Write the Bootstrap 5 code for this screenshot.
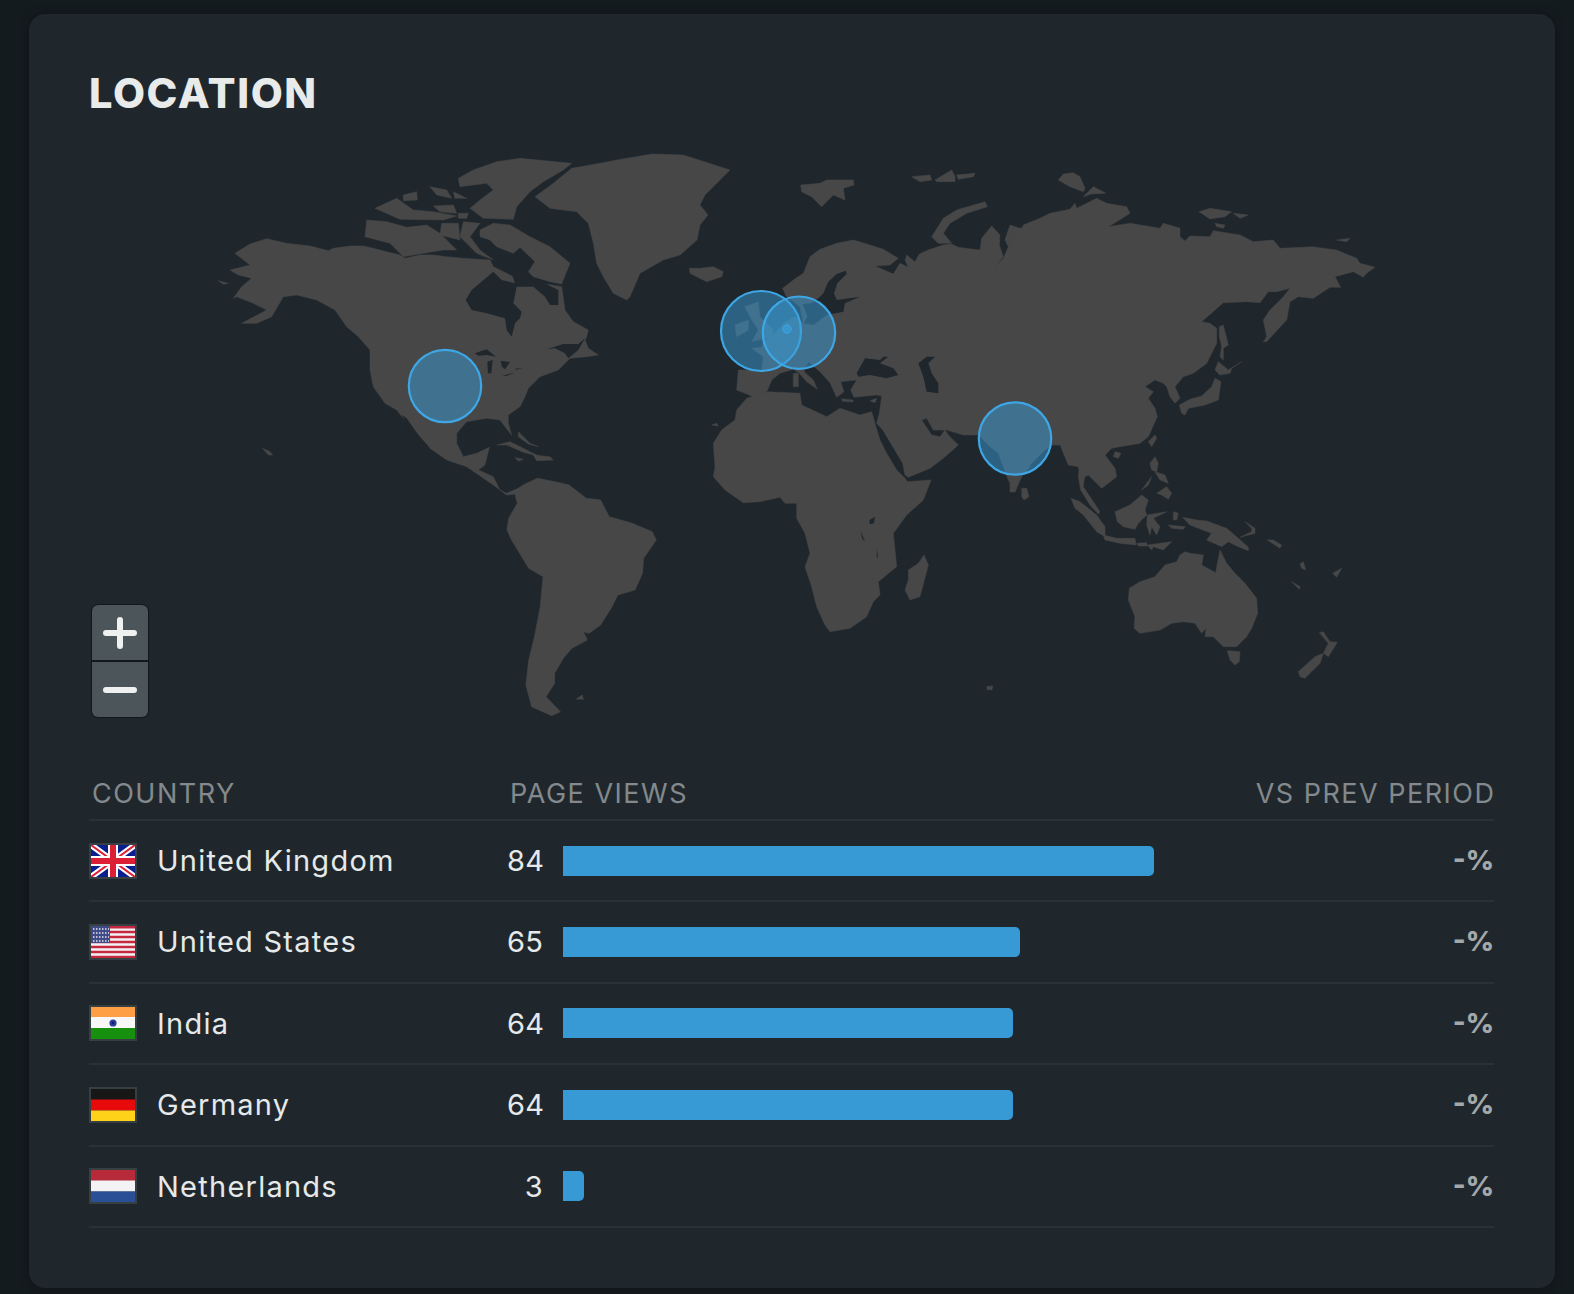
<!DOCTYPE html>
<html lang="en">
<head>
<meta charset="utf-8">
<title>Location</title>
<link href="https://cdn.jsdelivr.net/npm/bootstrap@5.3.0/dist/css/bootstrap.min.css" rel="stylesheet">
<style>
html, body { height: 1294px; overflow: hidden; }
body { background: #141b1f; font-family: Inter, "Liberation Sans", sans-serif; padding: 14px 19px 0 29px; }
.panel { background: #1f272d; border-radius: 16px; height: 1274px; padding: 55px 61px 0 60px; box-shadow: 0 0 10px rgba(0,0,0,.35); }
.panel-title { color: #e9ebeb; font-size: 41.5px; font-weight: 800; line-height: 48px; margin: 0 0 13px 0; letter-spacing: 1.6px; font-family: Inter, sans-serif; }
.map-wrap { height: 640px; }
.world { display: block; width: 1405px; height: 640px; }
.land { fill: #474747; stroke: #474747; stroke-width: 1.5; stroke-linejoin: round; }
.sea { fill: #1f272d; }
.bubble { fill: #3a9bd5; fill-opacity: .5; stroke: #3ea6e4; stroke-width: 2.2; }
.bubble-dot { fill: #3a9bd5; fill-opacity: .8; stroke: #3ea6e4; stroke-width: 1; }
.zoom-box { left: 2px; top: 474px; width: 58px; background: #11191f; border-radius: 7px; padding: 1px; gap: 2px; }
.zoom-btn { background: #4b555a; border: 0; padding: 0; width: 56px; height: 55px; display: flex; align-items: center; justify-content: center; border-radius: 0; }
.zoom-btn:first-child { border-radius: 6px 6px 0 0; }
.zoom-btn:last-child { border-radius: 0 0 6px 6px; }
.head-row { height: 51px; border-bottom: 2px solid #2a3236; color: #83898c; font-size: 27px; letter-spacing: 1.5px; padding-bottom: 5px; }
.head-row .head-end { margin-right: -1.5px; }
.data-row { height: 81.4px; border-bottom: 2px solid #2a3236; color: #e6e9e9; font-size: 29px; letter-spacing: 1.25px; }
.col-place { width: 421px; padding-left: 3px; }
.col-name { width: 418px; }
.flag-frame { display: block; width: 48px; height: 36px; background: #363f42; padding: 2px; margin-right: 20px; }
.flag-frame svg { display: block; width: 44px; height: 32px; }
.count { width: 36px; text-align: right; margin-right: 20px; letter-spacing: .3px; }
.track { width: 808px; }
.meter { height: 30px; background: #389ad5; border-radius: 0 5px 5px 0; }
.delta { color: #a3a8aa; font-weight: 800; font-size: 27.5px; letter-spacing: 0; }
</style>
</head>
<body>
<div class="panel">
  <h2 class="panel-title">LOCATION</h2>
  <div class="map-wrap position-relative">
    <svg class="world" viewBox="89 130 1405 640" role="img" aria-label="World map">
      <g transform="translate(200,140) scale(.33333)">
        <path class="land" d="M105,340 150,312 200,296 260,310 330,318 385,332 400,325 450,318 490,318 520,325 560,335 600,345 615,355 660,345 700,345 740,350 790,355 870,360 880,380 960,420 1085,440 1095,510 1120,545 1165,570 1160,590 1155,600 1165,625 1195,645 1160,650 1110,655 1075,690 1020,710 985,745 975,770 960,800 925,825 925,850 935,885 915,860 900,840 860,835 800,845 770,880 770,910 790,950 830,940 868,922 855,975 835,990 880,1010 900,1050 920,1060 965,1040 950,1062 920,1065 880,1035 800,980 740,960 690,925 650,880 610,835 590,810 555,790 520,740 510,690 510,630 475,590 440,560 405,510 350,480 290,465 250,470 215,530 170,550 125,550 200,510 160,490 110,470 100,475 125,440 155,415 115,405 90,390 150,375z"/>
        <path class="sea" d="M797,480 815,450 880,395 905,420 945,430 930,385 925,325 960,320 1000,360 975,385 960,410 1005,415 1050,438 1075,450 1075,495 1050,495 1035,470 1000,440 950,440 940,490 965,515 960,535 945,550 935,590 920,570 915,535 860,520 815,510z"/>
        <path class="sea" d="M825,640 860,628 888,650 860,645 835,647z M862,665 878,660 874,700 864,700z M902,662 930,666 915,688 906,680z M907,708 945,697 920,708z M947,686 968,683 947,690z M1040,628 1090,612 1135,612 1155,595 1135,630 1105,655 1095,640 1065,625z M605,825 620,835 655,885 690,925 660,905 625,860z"/>
        <path class="land" d="M840,270 880,250 930,255 990,290 1050,320 1110,370 1085,432 1050,425 1000,410 985,395 1005,365 960,322 940,340 890,320 870,300 840,290z"/>
        <path class="land" d="M775,115 820,90 890,65 960,55 1115,70 1090,90 1030,125 990,155 950,200 940,238 850,235 810,205 840,180 880,150 860,130 780,140z"/>
        <path class="land" d="M500,240 560,245 620,262 680,255 720,280 770,330 730,330 610,350 570,310 495,290z M525,205 590,175 640,210 700,215 770,228 730,240 600,238z M610,165 650,155 652,180 610,182z M690,140 740,150 755,175 710,165z M760,155 800,175 765,175z M700,198 760,195 770,220 720,215z M840,210 940,215 935,235 860,230z M775,220 805,220 800,235 775,235z M725,250 775,250 780,300 720,285z M790,245 840,250 810,290 840,330 880,360 830,340 780,290z"/>
        <path class="land" d="M1005,170 1060,130 1115,85 1200,70 1250,60 1356,42 1450,45 1590,90 1566,114 1515,165 1500,195 1524,225 1500,255 1491,300 1440,345 1390,360 1320,400 1290,470 1280,480 1240,460 1210,410 1190,370 1180,310 1165,250 1130,215 1050,205z"/>
        <path class="land" d="M890,915 930,905 980,930 1020,950 970,937 920,915z M1000,945 1050,950 1060,960 1010,962z M945,953 970,958 955,963z M955,875 965,885 990,910 1015,920 985,912 955,890z M188,925 210,935 218,945 205,945z M55,422 85,430 70,433z"/>
      </g>
      <g transform="translate(480,440) scale(.574,.33333)">
        <path class="land" d="M100,115 130,125 155,135 185,175 210,180 225,230 265,250 300,275 307,300 285,355 283,400 270,450 240,465 230,500 210,555 190,580 180,575 187,600 160,625 145,655 130,700 130,730 115,770 140,815 125,827 90,800 80,735 85,660 95,590 105,500 110,410 85,385 55,300 47,270 50,235 65,190 60,155 75,135z M168,777 178,765 180,778z M883,740 893,738 892,749 884,749z"/>
      </g>
      <g transform="translate(680,160) scale(.33333)">
        <path class="land" d="M1050,195 1020,205 990,195 975,240 985,260 970,295 945,320 970,290 958,255 960,225 935,198 905,235 900,270 880,268 835,262 815,252 790,255 745,270 718,282 705,305 680,285 675,300 685,322 660,310 640,342 600,325 585,318 630,315 655,295 610,268 570,255 520,240 470,250 420,268 390,290 370,340 340,360 308,385 318,408 345,428 360,440 370,490 345,470 310,490 285,520 250,545 245,562 215,565 250,590 245,630 175,630 170,690 200,702 225,712 262,692 275,660 300,640 340,628 358,640 380,665 412,688 400,660 372,635 385,605 420,635 450,668 470,712 492,695 482,665 530,660 512,690 522,712 590,705 605,708 598,760 590,790 610,812 637,858 668,910 675,945 685,952 750,925 790,895 835,855 805,825 795,810 780,830 755,825 725,780 740,775 760,810 800,810 850,825 895,825 930,860 955,880 985,960 1005,995 1025,950 1050,920z"/>
        <path class="sea" d="M430,400 445,365 470,342 497,332 500,342 472,370 462,400 470,420 540,410 495,430 490,455 440,465 400,495 372,490 382,470 368,432 395,430 420,410z"/>
        <path class="sea" d="M530,640 555,595 600,600 610,590 625,590 600,610 640,625 655,645 620,655 570,645 535,650z M715,610 740,590 765,590 745,610 755,640 775,670 775,700 740,695 730,650z"/>
        <path class="land" d="M28,325 60,325 100,320 130,335 125,350 80,365 50,350 30,340z"/>
        <path class="land" d="M755,230 790,175 830,150 915,125 922,140 860,160 810,190 790,220 815,250 775,250z"/>
        <path class="land" d="M362,75 420,70 440,60 520,60 522,75 490,85 495,120 460,105 425,140 395,110 365,95z M695,50 750,45 755,60 720,65z M765,60 815,30 825,50 825,65 770,65z M830,45 885,40 880,50 835,58z"/>
        <path class="land" d="M165,495 205,480 205,510 170,530z M195,440 235,425 240,470 280,510 275,530 215,545 235,510 210,470z M340,640 355,640 355,680 340,680z M485,716 520,720 518,726 488,724z M570,722 590,715 585,728z"/>
      </g>
      <g transform="translate(700,400) scale(.33333)">
        <path class="land" d="M140,-5 200,-25 300,-20 305,15 380,50 420,25 480,45 515,35 528,80 540,120 560,160 590,210 615,235 622,245 693,240 670,300 620,345 580,400 590,500 535,545 540,585 520,605 500,650 450,685 390,695 375,675 350,620 335,560 315,500 330,460 315,400 290,355 290,310 255,310 240,292 180,305 130,308 75,270 40,230 45,200 40,130 65,90 105,60 110,30z"/>
        <path class="sea" d="M508,360 525,350 522,370 510,373z M482,392 495,425 486,415z M530,445 534,475 530,470z"/>
        <path class="land" d="M625,510 655,490 672,465 685,495 660,590 630,600 615,570 625,540z M35,75 50,70 55,78z"/>
      </g>
      <g transform="translate(1020,160) scale(.33333)">
        <path class="land" d="M-30,215 5,215 10,195 60,175 90,160 150,148 165,130 170,145 230,115 260,130 320,140 330,160 290,185 265,200 330,190 420,205 430,190 480,205 480,230 495,243 510,228 570,230 580,212 660,225 700,245 760,240 780,265 850,262 875,260 950,270 1010,295 1020,310 1065,322 1040,340 1030,352 1000,335 945,350 962,382 930,382 880,415 835,410 810,425 800,480 740,545 730,545 740,530 730,480 750,450 790,410 810,385 770,395 745,395 720,428 680,425 610,428 545,485 570,490 590,505 590,550 560,610 520,640 490,650 465,680 480,715 465,730 450,710 440,680 430,670 405,660 375,680 400,695 385,715 405,745 412,770 385,830 360,850 300,860 275,865 255,885 285,925 290,950 245,985 205,945 195,950 188,975 175,920 145,915 120,855 95,855 75,870 30,915 5,945 -15,996 -30,996z"/>
        <path class="land" d="M598,500 610,495 625,555 610,565 610,600 600,590 605,560 598,530z M595,605 625,630 665,605 635,625 630,640 600,645 585,630z M585,655 603,665 595,720 555,735 530,740 505,745 495,765 485,760 478,735 510,718 545,708 575,680z M405,825 410,835 395,860 385,845z M285,875 303,880 295,895 280,890z M5,985 20,985 27,1010 12,1020 5,1010z M115,60 130,42 160,38 180,50 195,85 190,95 150,80z M190,110 220,80 258,100 215,102z M537,155 570,145 635,155 615,170 570,177z M640,160 685,165 660,175z M585,190 615,195 610,205 590,200z M950,240 990,235 980,245z"/>
      </g>
      <g transform="translate(1040,440) scale(.33333)">
        <path class="land" d="M118,85 132,105 130,140 180,215 175,222 150,195 122,150 115,110z M93,175 120,185 170,225 195,260 195,290 170,275 130,225 105,205z M190,285 230,295 285,295 288,315 240,310 195,300z M290,310 320,308 322,318 295,318z M322,315 395,305 370,330 340,320 335,330z M225,215 270,195 305,165 325,180 315,210 320,225 295,250 285,268 250,260 232,245z M322,225 380,215 340,235 360,260 350,285 335,260 330,285 320,255z M305,150 335,110 325,135z M350,160 380,140 395,160 385,178 365,165z M345,95 375,105 385,130 360,120z M330,70 345,50 355,70 350,95 335,90z M400,215 415,220 410,240 400,240z M385,255 435,260 430,268 395,265z"/>
        <path class="land" d="M428,232 470,240 500,243 560,265 595,295 625,322 625,332 590,318 565,305 545,320 500,300 515,280 475,265 450,255z M615,245 645,265 645,280 600,292 635,275 635,265z M682,300 700,300 725,315 720,325 700,312z M780,372 790,365 797,390 785,385z M755,425 780,440 778,448z M878,400 905,385 890,412z"/>
        <path class="land" d="M265,480 268,445 300,425 345,410 375,375 410,365 420,345 435,335 450,340 490,345 485,375 527,398 540,330 560,370 585,400 615,430 650,475 653,520 635,565 620,590 590,620 550,620 520,590 495,590 498,565 485,580 465,550 430,545 395,550 360,570 300,580 282,565 285,530z M562,632 600,635 598,665 585,675 570,660z M838,578 850,575 870,605 892,607 865,650 850,640 865,610z M775,695 825,650 850,640 840,670 795,715 780,710z"/>
      </g>
      <circle class="bubble" cx="445" cy="386" r="36.2"/>
      <circle class="bubble" cx="761" cy="331" r="40"/>
      <circle class="bubble" cx="799" cy="332.7" r="36.2"/>
      <circle class="bubble" cx="1015" cy="438.5" r="36.2"/>
      <circle class="bubble-dot" cx="787" cy="329" r="4.2"/>
    </svg>
    <div class="zoom-box position-absolute d-flex flex-column">
      <button class="zoom-btn" type="button" aria-label="Zoom in"><svg width="34" height="32" viewBox="0 0 34 32"><path d="M3 16H31M17 3V29" stroke="#eff1f1" stroke-width="6" stroke-linecap="round"/></svg></button>
      <button class="zoom-btn" type="button" aria-label="Zoom out"><svg width="34" height="8" viewBox="0 0 34 8"><path d="M3 4H31" stroke="#eff1f1" stroke-width="6" stroke-linecap="round"/></svg></button>
    </div>
  </div>

  <div class="head-row d-flex align-items-end">
    <div class="col-place">COUNTRY</div>
    <div class="flex-grow-1">PAGE VIEWS</div>
    <div class="head-end">VS PREV PERIOD</div>
  </div>

  <div class="data-row d-flex align-items-center">
    <div class="col-name d-flex align-items-center">
      <span class="flag-frame"><svg viewBox="0 0 44 32" preserveAspectRatio="none"><rect width="44" height="32" fill="#0a1f8f"/><path d="M0 0 44 32M44 0 0 32" stroke="#fff" stroke-width="6"/><path d="M0 0 44 32M44 0 0 32" stroke="#dd1f36" stroke-width="2"/><path d="M22 0V32M0 16H44" stroke="#fff" stroke-width="10"/><path d="M22 0V32M0 16H44" stroke="#dd1f36" stroke-width="6"/></svg></span>
      <span>United Kingdom</span>
    </div>
    <div class="count">84</div>
    <div class="track"><div class="meter" style="width:591px"></div></div>
    <div class="delta ms-auto">-%</div>
  </div>
  <div class="data-row d-flex align-items-center">
    <div class="col-name d-flex align-items-center">
      <span class="flag-frame"><svg viewBox="0 0 44 32" preserveAspectRatio="none"><rect width="44" height="32" fill="#f2f2f4"/><path d="M0 1.2H44M0 6H44M0 11H44M0 16H44M0 21H44M0 26H44M0 31H44" stroke="#c5283f" stroke-width="2.5"/><rect width="19" height="17" fill="#3f4a86"/><path d="M2 3H18M2 7H18M2 11H18M2 15H18" stroke="#e8e8f0" stroke-width="1.5" stroke-dasharray="1.5 1.5"/></svg></span>
      <span>United States</span>
    </div>
    <div class="count">65</div>
    <div class="track"><div class="meter" style="width:457px"></div></div>
    <div class="delta ms-auto">-%</div>
  </div>
  <div class="data-row d-flex align-items-center">
    <div class="col-name d-flex align-items-center">
      <span class="flag-frame"><svg viewBox="0 0 44 32" preserveAspectRatio="none"><rect width="44" height="11" fill="#ff9f45"/><rect y="10" width="44" height="12" fill="#f7f7f7"/><rect y="21" width="44" height="11" fill="#17900f"/><circle cx="22" cy="16" r="3.6" fill="#2f3f9c"/><circle cx="22" cy="16" r="1.4" fill="#0f1f70"/></svg></span>
      <span>India</span>
    </div>
    <div class="count">64</div>
    <div class="track"><div class="meter" style="width:450px"></div></div>
    <div class="delta ms-auto">-%</div>
  </div>
  <div class="data-row d-flex align-items-center">
    <div class="col-name d-flex align-items-center">
      <span class="flag-frame"><svg viewBox="0 0 44 32" preserveAspectRatio="none"><rect width="44" height="11" fill="#171717"/><rect y="10.5" width="44" height="11" fill="#e80a0a"/><rect y="21.5" width="44" height="10.5" fill="#ffd21a"/></svg></span>
      <span>Germany</span>
    </div>
    <div class="count">64</div>
    <div class="track"><div class="meter" style="width:450px"></div></div>
    <div class="delta ms-auto">-%</div>
  </div>
  <div class="data-row d-flex align-items-center">
    <div class="col-name d-flex align-items-center">
      <span class="flag-frame"><svg viewBox="0 0 44 32" preserveAspectRatio="none"><rect width="44" height="11" fill="#b72a39"/><rect y="10.5" width="44" height="11" fill="#f3f3f5"/><rect y="21.5" width="44" height="10.5" fill="#2b4f96"/></svg></span>
      <span>Netherlands</span>
    </div>
    <div class="count">3</div>
    <div class="track"><div class="meter" style="width:21px"></div></div>
    <div class="delta ms-auto">-%</div>
  </div>
</div>
<script src="https://cdn.jsdelivr.net/npm/bootstrap@5.3.0/dist/js/bootstrap.bundle.min.js"></script>
</body>
</html>
